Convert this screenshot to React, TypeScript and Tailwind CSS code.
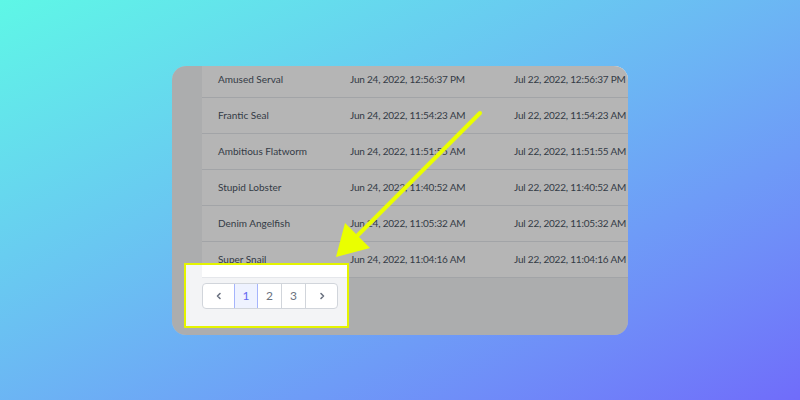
import React from "react";

const rows = [
  ["Amused Serval", "Jun 24, 2022, 12:56:37 PM", "Jul 22, 2022, 12:56:37 PM"],
  ["Frantic Seal", "Jun 24, 2022, 11:54:23 AM", "Jul 22, 2022, 11:54:23 AM"],
  ["Ambitious Flatworm", "Jun 24, 2022, 11:51:55 AM", "Jul 22, 2022, 11:51:55 AM"],
  ["Stupid Lobster", "Jun 24, 2022, 11:40:52 AM", "Jul 22, 2022, 11:40:52 AM"],
  ["Denim Angelfish", "Jun 24, 2022, 11:05:32 AM", "Jul 22, 2022, 11:05:32 AM"],
  ["Super Snail", "Jun 24, 2022, 11:04:16 AM", "Jul 22, 2022, 11:04:16 AM"],
];

function Chevron({ dir }: { dir: "left" | "right" }) {
  return (
    <svg width="10" height="10" viewBox="0 0 10 10" fill="none" stroke="#6b7280" strokeWidth="1.6" strokeLinecap="round" strokeLinejoin="round">
      {dir === "left" ? <path d="M6 2.5 3.5 5 6 7.5" /> : <path d="M4 2.5 6.5 5 4 7.5" />}
    </svg>
  );
}

export default function App() {
  return (
    <div
      className="relative w-[800px] h-[400px] flex items-center justify-center bg-gradient-to-br from-[#5ef7e6] to-[#706cfa] overflow-hidden"
      style={{ fontFamily: "Lato, 'Open Sans', sans-serif" }}
    >
      <div className="relative w-[456px] h-[269px] rounded-[14px] overflow-hidden bg-[#f3f4f6]">
        <div className="pl-[30px] -mt-[4px]">
          <div className="w-[480px] bg-white">
            {rows.map((r) => (
              <div key={r[0]} className="flex h-[36px] items-center border-b border-[#e5e7eb] text-[10px] text-[#4b5563]">
                <div className="w-[132px] px-4 whitespace-nowrap">{r[0]}</div>
                <div className="w-[164px] px-4 whitespace-nowrap tracking-[-0.2px]">{r[1]}</div>
                <div className="w-[184px] px-4 whitespace-nowrap tracking-[-0.2px]">{r[2]}</div>
              </div>
            ))}
          </div>
          <div className="mt-[5px] flex">
            <div className="flex h-[26px] rounded-[4px] border border-[#d1d5db] bg-white overflow-hidden text-[12px] text-[#6b7280]">
              <button className="w-[31px] flex items-center justify-center">
                <Chevron dir="left" />
              </button>
              <button className="w-[24px] flex items-center justify-center bg-[#eef2ff] border border-[#a5b4fc] -my-px text-[#6366f1]">1</button>
              <button className="w-[24px] flex items-center justify-center border-r border-[#d1d5db]">2</button>
              <button className="w-[24px] flex items-center justify-center border-r border-[#d1d5db]">3</button>
              <button className="w-[31px] flex items-center justify-center">
                <Chevron dir="right" />
              </button>
            </div>
          </div>
        </div>
        <div className="absolute left-[12px] top-[197px] w-[165px] h-[65px] border-2 border-[#e4f400] shadow-[0_0_0_9999px_rgba(0,0,0,0.29)]" />
      </div>
      <svg className="absolute left-0 top-0 pointer-events-none" width="800" height="400" viewBox="0 0 800 400">
        <line x1="480" y1="113" x2="358" y2="235" stroke="#eaff00" strokeWidth="4" strokeLinecap="round" />
        <polygon points="336,257 345,223 370,248" fill="#eaff00" />
      </svg>
    </div>
  );
}
